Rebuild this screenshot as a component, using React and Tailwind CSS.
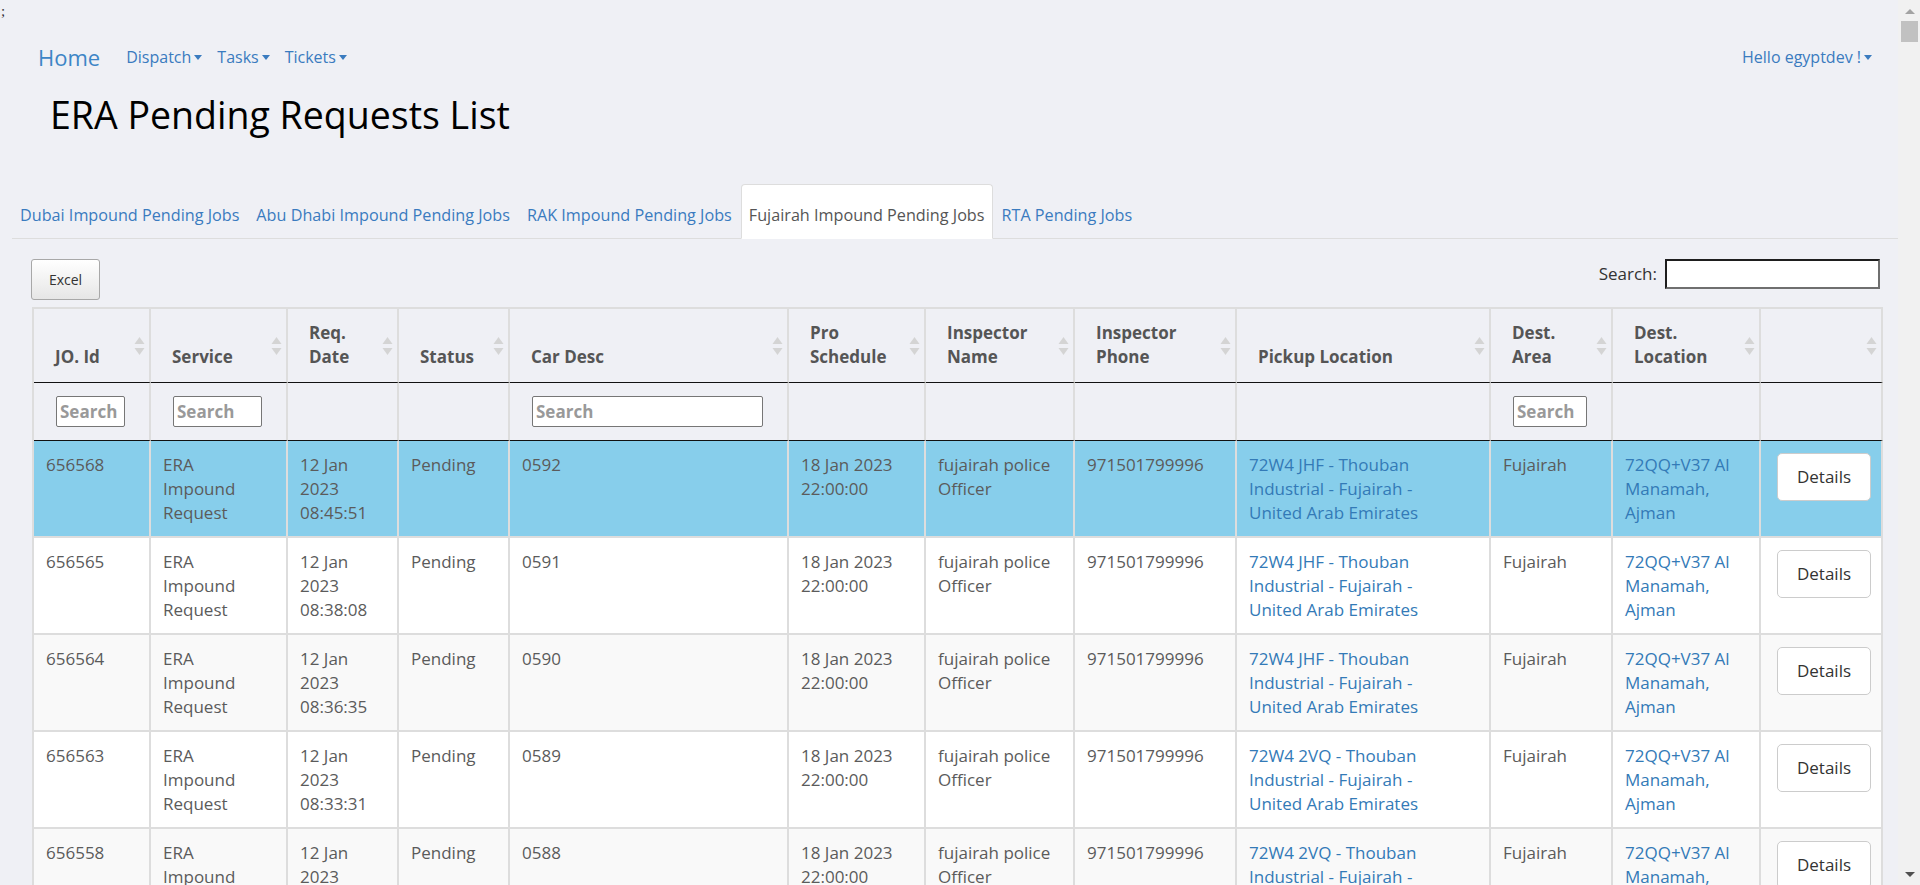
import React from 'react';

const columns = [
  { label: ['JO. Id'], width: 117, filter: true },
  { label: ['Service'], width: 137, filter: true },
  { label: ['Req.', 'Date'], width: 111 },
  { label: ['Status'], width: 111 },
  { label: ['Car Desc'], width: 279, filter: true },
  { label: ['Pro', 'Schedule'], width: 137 },
  { label: ['Inspector', 'Name'], width: 149 },
  { label: ['Inspector', 'Phone'], width: 162 },
  { label: ['Pickup Location'], width: 254 },
  { label: ['Dest.', 'Area'], width: 122, filter: true },
  { label: ['Dest.', 'Location'], width: 148 },
  { label: [], width: 122 },
];

const jobs = [
  { id: '656568', time: '08:45:51', car: '0592', code: '72W4 JHF' },
  { id: '656565', time: '08:38:08', car: '0591', code: '72W4 JHF' },
  { id: '656564', time: '08:36:35', car: '0590', code: '72W4 JHF' },
  { id: '656563', time: '08:33:31', car: '0589', code: '72W4 2VQ' },
  { id: '656558', time: '08:21:14', car: '0588', code: '72W4 2VQ' },
  { id: '656551', time: '08:02:40', car: '0587', code: '72W4 2VQ' },
];

const tabs = [
  'Dubai Impound Pending Jobs',
  'Abu Dhabi Impound Pending Jobs',
  'RAK Impound Pending Jobs',
  'Fujairah Impound Pending Jobs',
  'RTA Pending Jobs',
];

function Caret() {
  return (
    <span className="ml-[3px] inline-block align-middle border-x-[4px] border-t-[5px] border-x-transparent border-t-[#3a7bbf]" />
  );
}

function SortIcon() {
  return (
    <svg
      width="11"
      height="18"
      viewBox="0 0 11 18"
      className="absolute right-[4px] top-1/2 -translate-y-1/2"
    >
      <path d="M5.5 0 L10.5 7 L0.5 7 Z" fill="#d4d4d4" />
      <path d="M0.5 11 L10.5 11 L5.5 18 Z" fill="#d4d4d4" />
    </svg>
  );
}

function Lines({ items, className = '' }) {
  return (
    <div className={className}>
      {items.map((line, i) => (
        <div key={i}>{line}</div>
      ))}
    </div>
  );
}

export default function App() {
  const rowBg = (i) =>
    i === 0 ? 'bg-[#87ceeb]' : i % 2 === 0 ? 'bg-[#f9f9f9]' : 'bg-white';

  return (
    <div className="flex h-screen overflow-hidden bg-[#eff0f5] font-['Open_Sans',sans-serif]">
      <div className="min-w-0 flex-1 overflow-hidden">
        {/* stray char */}
        <div className="h-[20px] pl-[1px] font-['Liberation_Serif',serif] text-[15px] leading-[22px] text-[#333]">
          ;
        </div>

        {/* Navbar */}
        <nav className="flex h-[74px] items-center justify-between pl-[38px] pr-[26px]">
          <div className="flex items-center">
            <span className="text-[22px] leading-none text-[#3d85c6]">Home</span>
            <div className="ml-[26px] flex items-center gap-[15px] text-[16px] text-[#3a7bbf]">
              <span className="flex items-center">Dispatch<Caret /></span>
              <span className="flex items-center">Tasks<Caret /></span>
              <span className="flex items-center">Tickets<Caret /></span>
            </div>
          </div>
          <span className="flex items-center text-[16px] text-[#3a7bbf]">
            Hello egyptdev !<Caret />
          </span>
        </nav>

        <h1 className="pl-[50px] text-[37.5px] leading-[42px] font-normal text-black">
          ERA Pending Requests List
        </h1>

        {/* Tabs */}
        <ul className="ml-[12px] mt-[48px] flex border-b border-[#dddddd]">
          {tabs.map((t) => {
            const active = t.startsWith('Fujairah');
            return (
              <li
                key={t}
                className={`-mb-px mr-[1px] rounded-t-[4px] border px-[7px] pt-[19px] pb-[12px] text-[16.2px] leading-[22px] ${
                  active
                    ? 'border-[#dddddd] border-b-white bg-white text-[#555]'
                    : 'border-transparent text-[#3a7bbf]'
                }`}
              >
                {t}
              </li>
            );
          })}
        </ul>

        {/* Toolbar */}
        <div className="mt-[20px] flex items-start justify-between pl-[31px] pr-[18px]">
          <button className="h-[41px] w-[69px] rounded-[3px] border border-[#a8a8a8] bg-gradient-to-b from-white to-[#e6e6e6] text-[14px] text-[#333]">
            Excel
          </button>
          <label className="flex h-[30px] items-center gap-[8px] text-[17px] text-[#333]">
            Search:
            <input className="h-[30px] w-[215px] border-2 border-t-[#1e1e1e] border-l-[#1e1e1e] border-r-[#6f6f6f] border-b-[#6f6f6f] bg-white outline-none" />
          </label>
        </div>

        {/* Table */}
        <table className="ml-[32px] mt-[7px] w-[1849px] table-fixed border-separate border-spacing-0 border-l-2 border-t-2 border-[#dddddd] text-[17px]">
          <colgroup>
            {columns.map((c, i) => (
              <col key={i} style={{ width: c.width }} />
            ))}
          </colgroup>
          <thead>
            <tr>
              {columns.map((c, i) => (
                <th
                  key={i}
                  className="relative border-r-2 border-b border-r-[#dddddd] border-b-[#111111] pl-[21px] pr-[22px] pt-[12px] pb-[13px] text-left align-bottom font-bold leading-[24px] text-[#555]"
                >
                  <Lines items={c.label} />
                  <SortIcon />
                </th>
              ))}
            </tr>
            <tr>
              {columns.map((c, i) => (
                <th
                  key={i}
                  className="h-[58px] border-r-2 border-b border-r-[#dddddd] border-b-[#111111] pl-[22px] pr-[24px] pt-[13px] pb-[13px] align-top font-bold"
                >
                  {c.filter && (
                    <input
                      placeholder="Search"
                      className="block h-[31px] w-full rounded-[2px] border border-[#767676] bg-white px-[3px] text-[17px] font-bold text-[#555] outline-none placeholder:text-[#999]"
                    />
                  )}
                </th>
              ))}
            </tr>
          </thead>
          <tbody className="leading-[24px] text-[#5b5b5b]">
            {jobs.map((j, i) => {
              const td = 'border-r-2 border-b-2 border-[#dddddd] px-[12px] pt-[12px] pb-[11px] align-top';
              return (
                <tr key={j.id} className={rowBg(i)}>
                  <td className={td}>{j.id}</td>
                  <td className={td}>
                    <Lines items={['ERA', 'Impound', 'Request']} />
                  </td>
                  <td className={td}>
                    <Lines items={['12 Jan', '2023', j.time]} />
                  </td>
                  <td className={td}>Pending</td>
                  <td className={td}>{j.car}</td>
                  <td className={td}>
                    <Lines items={['18 Jan 2023', '22:00:00']} />
                  </td>
                  <td className={td}>
                    <Lines items={['fujairah police', 'Officer']} />
                  </td>
                  <td className={td}>971501799996</td>
                  <td className={td}>
                    <Lines
                      className="text-[#337ab7]"
                      items={[`${j.code} - Thouban`, 'Industrial - Fujairah -', 'United Arab Emirates']}
                    />
                  </td>
                  <td className={td}>Fujairah</td>
                  <td className={td}>
                    <Lines className="text-[#337ab7]" items={['72QQ+V37 Al', 'Manamah,', 'Ajman']} />
                  </td>
                  <td className={`${td} pl-[16px]`}>
                    <button className="h-[48px] w-[94px] rounded-[5px] border border-[#cccccc] bg-white text-[17px] text-[#333]">
                      Details
                    </button>
                  </td>
                </tr>
              );
            })}
          </tbody>
        </table>
      </div>

      {/* Scrollbar */}
      <div className="flex w-[22px] flex-col bg-[#f1f1f1]">
        <div className="flex h-[21px] justify-center pt-[9px] pl-[1px]">
          <span className="inline-block h-0 w-0 border-x-[5px] border-b-[5px] border-x-transparent border-b-[#a3a3a3]" />
        </div>
        <div className="ml-[3px] mr-[2px] h-[21px] bg-[#c1c1c1]" />
        <div className="flex-1" />
        <div className="flex h-[17px] justify-center pt-[4px] pl-[1px]">
          <span className="inline-block h-0 w-0 border-x-[5px] border-t-[5px] border-x-transparent border-t-[#505050]" />
        </div>
      </div>
    </div>
  );
}
